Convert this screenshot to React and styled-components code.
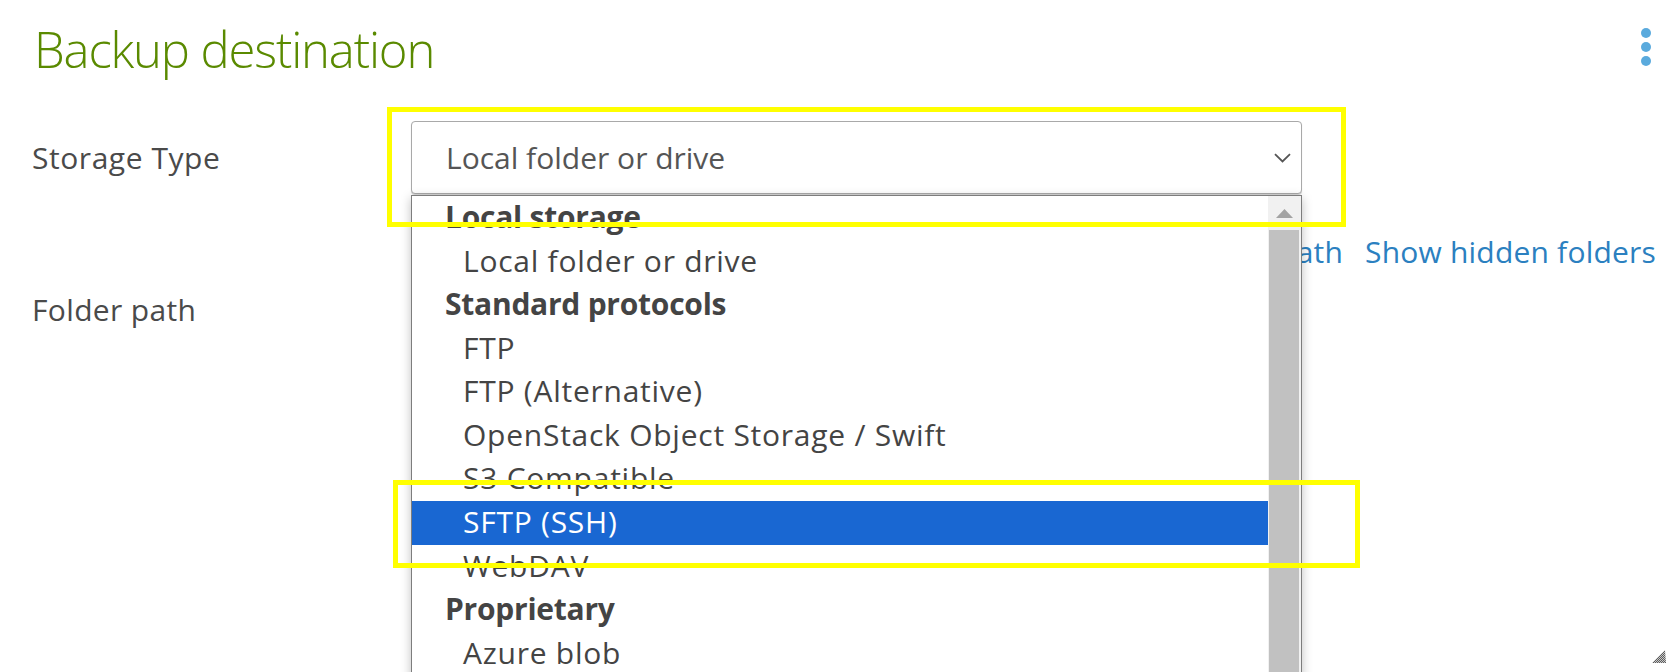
import React from "react";
import styled, { createGlobalStyle } from "styled-components";

const GlobalStyle = createGlobalStyle`
  html, body {
    margin: 0;
    padding: 0;
    overflow: hidden;
    background: #ffffff;
  }
  body {
    font-family: "Open Sans", "Noto Sans", "Liberation Sans", sans-serif;
  }
  * { box-sizing: border-box; }
`;

const Page = styled.div`
  position: relative;
  width: 1678px;
  height: 672px;
  overflow: hidden;
  padding: 0 22px 0 32px;
  color: #4a4a4a;
`;

const Header = styled.header`
  display: flex;
  justify-content: space-between;
  align-items: flex-start;
  height: 121px;
`;

const Title = styled.h1`
  margin: 15px 0 0 2px;
  font-size: 49px;
  line-height: 68px;
  font-weight: 300;
  letter-spacing: -1.15px;
  color: #5a8a00;
`;

const Kebab = styled.div`
  display: flex;
  flex-direction: column;
  gap: 4px;
  margin: 28px 5px 0 0;
`;

const Dot = styled.span`
  width: 10px;
  height: 10px;
  border-radius: 50%;
  background: #5aaadd;
`;

const FormRow = styled.div`
  display: grid;
  grid-template-columns: 379px 1fr;
  align-items: ${(p) => (p.$top ? "start" : "center")};
  margin-top: ${(p) => p.$mt || 0}px;
`;

const Label = styled.label`
  font-size: 30px;
  line-height: 40px;
  letter-spacing: ${(p) => p.$ls || 0.2}px;
  color: #4a4a4a;
`;

const SelectWrap = styled.div`
  position: relative;
  width: 891px;
  z-index: 2;
`;

const SelectBox = styled.div`
  height: 73px;
  border: 1px solid #a9a9a9;
  border-radius: 4px;
  display: flex;
  align-items: center;
  justify-content: space-between;
  padding: 0 10px 0 34px;
  font-size: 30px;
  line-height: 40px;
  color: #555555;
  background: #fff;
  box-shadow: 0 1px 1px rgba(0, 0, 0, 0.18);
`;

const Dropdown = styled.div`
  position: absolute;
  top: calc(100% + 1px);
  left: 0;
  width: 891px;
  height: 520px;
  display: flex;
  border: 1px solid #7d7d7d;
  background: #fff;
  box-shadow: 0 3px 10px rgba(0, 0, 0, 0.25);
`;

const OptionList = styled.ul`
  flex: 1;
  margin: 0;
  padding: 0;
  list-style: none;
  display: flex;
  flex-direction: column;
  overflow: hidden;
`;

const OptionRow = styled.li`
  flex: 0 0 43.57px;
  height: 43.57px;
  line-height: 38.8px;
  padding: 2px 0 2.77px ${(p) => (p.$group ? 33 : 51)}px;
  font-size: 30px;
  letter-spacing: ${(p) => (p.$group ? "-0.25px" : "0.75px")};
  font-weight: ${(p) => (p.$group ? 700 : 400)};
  color: ${(p) => (p.$selected ? "#ffffff" : "#444444")};
  background: ${(p) => (p.$selected ? "#1967d2" : "transparent")};
  white-space: nowrap;
`;

const Scrollbar = styled.div`
  width: 33px;
  flex: 0 0 33px;
  background: #f1f1f1;
  display: flex;
  flex-direction: column;
`;

const ScrollArrow = styled.div`
  height: 34px;
  display: flex;
  align-items: center;
  justify-content: center;
`;

const ScrollThumb = styled.div`
  flex: 1;
  margin: 0 2px 0 1px;
  background: #c1c1c1;
`;

const LinksRow = styled.div`
  display: flex;
  justify-content: flex-end;
  gap: 22px;
  margin-top: 38px;
  font-size: 30px;
  line-height: 40px;
  letter-spacing: 0.2px;
`;

const Link = styled.a`
  color: #2b80c0;
  text-decoration: none;
  cursor: pointer;
`;

const FolderBox = styled.div`
  height: 374px;
  margin-right: -11px;
  display: flex;
  align-items: flex-end;
  justify-content: flex-end;
`;

const Annotation = styled.div`
  position: absolute;
  left: ${(p) => p.$x}px;
  top: ${(p) => p.$y}px;
  width: ${(p) => p.$w}px;
  height: ${(p) => p.$h}px;
  border: 5px solid #ffff00;
  z-index: 5;
  pointer-events: none;
`;

const Chevron = () => (
  <svg width="17" height="10" viewBox="0 0 17 10" aria-hidden="true">
    <polyline points="1,1.2 8.5,8.5 16,1.2" fill="none" stroke="#555" strokeWidth="1.8" />
  </svg>
);

const UpTriangle = () => (
  <svg width="17" height="9" viewBox="0 0 17 9" aria-hidden="true">
    <polygon points="0,9 8.5,0 17,9" fill="#a3a3a3" />
  </svg>
);

const ResizeGrip = () => (
  <svg width="16" height="16" viewBox="0 0 16 16" aria-hidden="true">
    <defs>
      <pattern id="chk" width="2" height="2" patternUnits="userSpaceOnUse">
        <rect width="1" height="1" fill="#5e5e5e" />
        <rect x="1" y="1" width="1" height="1" fill="#5e5e5e" />
        <rect x="1" width="1" height="1" fill="#c8c8c8" />
        <rect y="1" width="1" height="1" fill="#c8c8c8" />
      </pattern>
    </defs>
    <polygon points="1,15 14,2 15,15" fill="url(#chk)" />
  </svg>
);

const options = [
  { label: "Local storage", group: true },
  { label: "Local folder or drive" },
  { label: "Standard protocols", group: true },
  { label: "FTP" },
  { label: "FTP (Alternative)" },
  { label: "OpenStack Object Storage / Swift" },
  { label: "S3 Compatible" },
  { label: "SFTP (SSH)", selected: true },
  { label: "WebDAV" },
  { label: "Proprietary", group: true },
  { label: "Azure blob" },
];

export default function App() {
  return (
    <>
      <GlobalStyle />
      <Page>
        <Header>
          <Title>Backup destination</Title>
          <Kebab>
            <Dot />
            <Dot />
            <Dot />
          </Kebab>
        </Header>

        <FormRow>
          <Label $ls={0.55}>Storage Type</Label>
          <SelectWrap>
            <SelectBox>
              <span>Local folder or drive</span>
              <Chevron />
            </SelectBox>
            <Dropdown>
              <OptionList>
                {options.map((o) => (
                  <OptionRow key={o.label} $group={o.group} $selected={o.selected}>
                    {o.label}
                  </OptionRow>
                ))}
              </OptionList>
              <Scrollbar>
                <ScrollArrow>
                  <UpTriangle />
                </ScrollArrow>
                <ScrollThumb />
              </Scrollbar>
            </Dropdown>
          </SelectWrap>
        </FormRow>

        <LinksRow>
          <Link>Manually type path</Link>
          <Link>Show hidden folders</Link>
        </LinksRow>

        <FormRow $top $mt={18}>
          <Label $ls={0.35}>Folder path</Label>
          <FolderBox>
            <ResizeGrip />
          </FolderBox>
        </FormRow>

        <Annotation $x={387} $y={107} $w={959} $h={120} />
        <Annotation $x={393} $y={480} $w={967} $h={88} />
      </Page>
    </>
  );
}
